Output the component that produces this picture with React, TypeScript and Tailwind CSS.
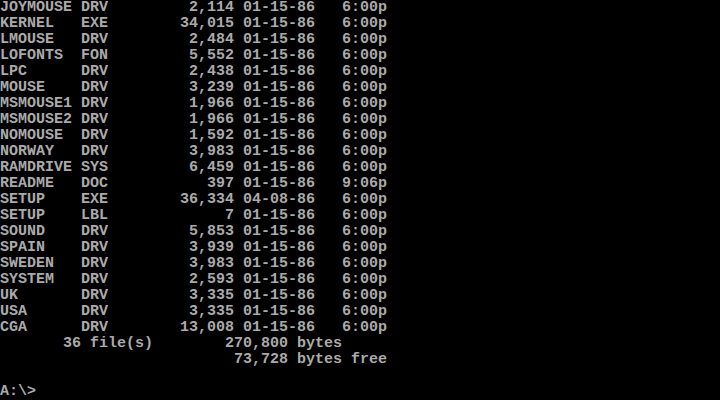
const files: [string, string, string, string, string][] = [
  ["JOYMOUSE", "DRV", "2,114", "01-15-86", "6:00p"],
  ["KERNEL", "EXE", "34,015", "01-15-86", "6:00p"],
  ["LMOUSE", "DRV", "2,484", "01-15-86", "6:00p"],
  ["LOFONTS", "FON", "5,552", "01-15-86", "6:00p"],
  ["LPC", "DRV", "2,438", "01-15-86", "6:00p"],
  ["MOUSE", "DRV", "3,239", "01-15-86", "6:00p"],
  ["MSMOUSE1", "DRV", "1,966", "01-15-86", "6:00p"],
  ["MSMOUSE2", "DRV", "1,966", "01-15-86", "6:00p"],
  ["NOMOUSE", "DRV", "1,592", "01-15-86", "6:00p"],
  ["NORWAY", "DRV", "3,983", "01-15-86", "6:00p"],
  ["RAMDRIVE", "SYS", "6,459", "01-15-86", "6:00p"],
  ["README", "DOC", "397", "01-15-86", "9:06p"],
  ["SETUP", "EXE", "36,334", "04-08-86", "6:00p"],
  ["SETUP", "LBL", "7", "01-15-86", "6:00p"],
  ["SOUND", "DRV", "5,853", "01-15-86", "6:00p"],
  ["SPAIN", "DRV", "3,939", "01-15-86", "6:00p"],
  ["SWEDEN", "DRV", "3,983", "01-15-86", "6:00p"],
  ["SYSTEM", "DRV", "2,593", "01-15-86", "6:00p"],
  ["UK", "DRV", "3,335", "01-15-86", "6:00p"],
  ["USA", "DRV", "3,335", "01-15-86", "6:00p"],
  ["CGA", "DRV", "13,008", "01-15-86", "6:00p"],
];

// DOS dir columns: name(8) ext(3) size(right, ends col 25) date time
function row(f: [string, string, string, string, string]) {
  const [name, ext, size, date, time] = f;
  return (
    name.padEnd(8) +
    " " +
    ext.padEnd(3) +
    size.padStart(14) +
    " " +
    date +
    time.padStart(8)
  );
}

const lines = [
  ...files.map(row),
  "       36 file(s)" + "270,800".padStart(15) + " bytes",
  "73,728".padStart(32) + " bytes free",
  "",
  "A:\\>",
];

export default function App() {
  return (
    <div
      className="w-[720px] h-[400px] bg-black text-[#aaaaaa] overflow-hidden flex flex-col text-[15px] leading-4 font-bold"
      style={{ fontFamily: '"Liberation Mono", "DejaVu Sans Mono", monospace' }}
    >
      {lines.map((l, i) => (
        <div key={i} className="h-4 whitespace-pre">
          {l}
        </div>
      ))}
    </div>
  );
}
